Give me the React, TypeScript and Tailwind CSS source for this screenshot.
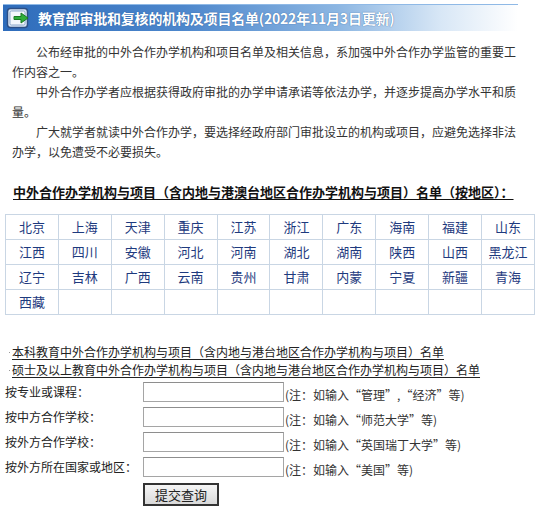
const intro = [
  "公布经审批的中外合作办学机构和项目名单及相关信息，系加强中外合作办学监管的重要工作内容之一。",
  "中外合作办学者应根据获得政府审批的办学申请承诺等依法办学，并逐步提高办学水平和质量。",
  "广大就学者就读中外合作办学，要选择经政府部门审批设立的机构或项目，应避免选择非法办学，以免遭受不必要损失。",
];

const regions = [
  ["北京", "上海", "天津", "重庆", "江苏", "浙江", "广东", "海南", "福建", "山东"],
  ["江西", "四川", "安徽", "河北", "河南", "湖北", "湖南", "陕西", "山西", "黑龙江"],
  ["辽宁", "吉林", "广西", "云南", "贵州", "甘肃", "内蒙", "宁夏", "新疆", "青海"],
  ["西藏", "", "", "", "", "", "", "", "", ""],
];

const links = [
  "本科教育中外合作办学机构与项目（含内地与港台地区合作办学机构与项目）名单",
  "硕士及以上教育中外合作办学机构与项目（含内地与港台地区合作办学机构与项目）名单",
];

const fields = [
  { label: "按专业或课程：", note: "(注：如输入“管理”,“经济”等)" },
  { label: "按中方合作学校：", note: "(注：如输入“师范大学”等)" },
  { label: "按外方合作学校：", note: "(注：如输入“英国瑞丁大学”等)" },
  { label: "按外方所在国家或地区：", note: "(注：如输入“美国”等)" },
];

function ArrowIcon() {
  return (
    <svg width="26" height="24" viewBox="0 0 26 24">
      <rect x="1.5" y="2.5" width="20" height="19" rx="3" fill="#dbe6f3" stroke="#2c4f86" strokeWidth="1.5" />
      <rect x="4" y="5" width="15" height="14" rx="1.5" fill="#f4f8fc" stroke="#8fa9cc" />
      <path d="M8 10.5h7v-3.5l7 5-7 5v-3.5h-7z" fill="#2fae3a" stroke="#1c7a24" strokeWidth="1" strokeLinejoin="round" />
    </svg>
  );
}

export default function App() {
  return (
    <div className="w-[548px] h-[517px] overflow-hidden bg-white font-['Noto_Sans_CJK_SC',sans-serif] text-[#222]">
      {/* title bar */}
      <div className="mt-[4px] ml-[3px] mr-[30px] h-[27px] flex items-center gap-[6px] pl-[3px] bg-[linear-gradient(to_right,#2e6cbb_0%,#4d87cc_35%,#8cb6e2_65%,#d8e7f6_85%,#ffffff_100%)] border-t border-[#8fb9e6]">
        <ArrowIcon />
        <span className="text-[14px] font-bold text-white tracking-[-0.2px] [text-shadow:0_0_1px_#1d4c8c]">
          教育部审批和复核的机构及项目名单(2022年11月3日更新)
        </span>
      </div>

      {/* intro */}
      <div className="mt-[11px] ml-[12px] w-[508px] text-[12px] leading-[20px] text-[#333]">
        {intro.map((t) => (
          <p key={t} className="indent-[24px]">{t}</p>
        ))}
      </div>

      <div className="mt-[21px] ml-[13px] text-[13px] leading-[18px] font-bold underline underline-offset-2 text-[#111]">
        中外合作办学机构与项目（含内地与港澳台地区合作办学机构与项目）名单（按地区）：
      </div>

      {/* regions */}
      <table className="mt-[13px] ml-[5px] w-[530px] border-collapse table-fixed text-[13px] text-[#1e3a7e]">
        <tbody>
          {regions.map((row, i) => (
            <tr key={i} className="h-[25px]">
              {row.map((name, j) => (
                <td key={j} className="border border-[#c9d6e4] text-center p-0 leading-[24px]">
                  {name}
                </td>
              ))}
            </tr>
          ))}
        </tbody>
      </table>

      {/* links */}
      <div className="mt-[28px] ml-[9px] text-[12px] leading-[18px] text-[#222]">
        {links.map((l) => (
          <div key={l} className="flex items-center gap-[2px]">
            <span className="w-[1px] h-[1px] bg-[#999]" />
            <span className="underline underline-offset-2">{l}</span>
          </div>
        ))}
      </div>

      {/* search form */}
      <div className="mt-[3px] ml-[5px] flex flex-col gap-[5px] text-[12px] text-[#222]">
        {fields.map((f) => (
          <div key={f.label} className="flex items-center h-[20px]">
            <span className="w-[138px]">{f.label}</span>
            <input className="w-[141px] h-[20px] border border-[#a5a5a5] border-t-[#8e8e8e] bg-white outline-none" />
            <span className="ml-[1px] mt-[5px] text-[#333]">{f.note}</span>
          </div>
        ))}
        <div className="flex pl-[138px] mt-[1px]">
          <button className="w-[76px] h-[23px] border-2 border-[#333] bg-[linear-gradient(to_bottom,#f6f6f6,#d9d9d9)] text-[13px] leading-[18px] text-[#222]">
            提交查询
          </button>
        </div>
      </div>
    </div>
  );
}
